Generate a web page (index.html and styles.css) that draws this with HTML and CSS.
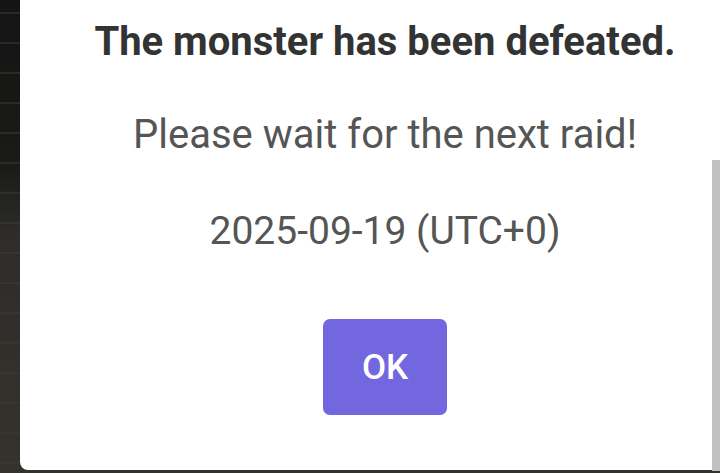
FILE: index.html
```html
<!DOCTYPE html>
<html lang="en">
<head>
<meta charset="utf-8">
<title>Raid</title>
<link rel="stylesheet" href="styles.css">
</head>
<body>
<div class="backdrop">
  <div class="dialog">
    <h2 class="title">The monster has been defeated.</h2>
    <p class="message">Please wait for the next raid!</p>
    <p class="message date">2025-09-19 (UTC+0)</p>
    <button class="ok-btn" type="button">OK</button>
    <div class="scroll-thumb"></div>
  </div>
</div>
</body>
</html>
```
FILE: styles.css
```css
html, body {
  margin: 0;
  padding: 0;
  width: 720px;
  height: 473px;
  overflow: hidden;
}

body {
  font-family: Roboto, "Noto Sans", sans-serif;
  background: #26251f;
}

.backdrop {
  width: 720px;
  height: 473px;
  overflow: hidden;
  background:
    repeating-linear-gradient(180deg, rgba(0,0,0,0) 0 12px, rgba(60,60,55,0.5) 12px 14px, rgba(0,0,0,0) 14px 30px),
    linear-gradient(180deg, #141414 0%, #1a1a18 35%, #2e2d29 50%, #33322d 100%);
  position: relative;
}

.dialog {
  margin-left: 20px;
  width: 730px;
  height: 470px;
  background: #ffffff;
  border-radius: 0 0 8px 8px;
  box-sizing: border-box;
  padding-top: 18px;
  display: flex;
  flex-direction: column;
  align-items: center;
  position: relative;
}

.title {
  margin: 0;
  font-size: 40px;
  line-height: 48px;
  font-weight: 700;
  color: #333333;
  white-space: nowrap;
}

.message {
  margin: 45px 0 0;
  font-size: 40px;
  line-height: 48px;
  font-weight: 400;
  color: #555555;
  white-space: nowrap;
}

.date {
  margin-top: 48px;
  font-size: 39px;
}

.ok-btn {
  margin-top: 64px;
  width: 124px;
  height: 96px;
  border: none;
  border-radius: 7px;
  background: #7367e0;
  color: #ffffff;
  font-family: Roboto, "Noto Sans", sans-serif;
  font-size: 35px;
  font-weight: 500;
  padding: 0;
  display: flex;
  align-items: center;
  justify-content: center;
}

.scroll-thumb {
  position: absolute;
  left: 692px;
  top: 160px;
  width: 8px;
  height: 311px;
  background: #c1c1c1;
}
```
